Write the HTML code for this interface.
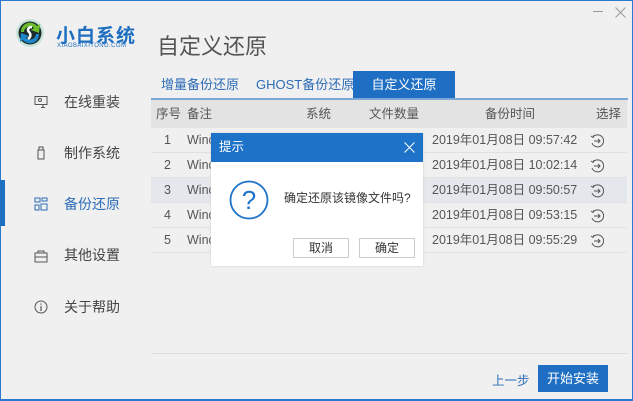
<!DOCTYPE html>
<html><head><meta charset="utf-8"><style>
*{margin:0;padding:0;box-sizing:border-box}
body{width:633px;height:401px;overflow:hidden;background:#f0f0f0;font-family:"Liberation Sans","Noto Sans CJK SC",sans-serif;position:relative}
.win{position:absolute;left:0;top:0;width:633px;height:401px;border:1px solid #2a7bd0;border-bottom-width:2px;border-right-width:1px}
.a{position:absolute;white-space:nowrap}
.nav{position:absolute;left:64px;font-size:14px;color:#444}
.ico{position:absolute;left:34px}
.tab{position:absolute;top:71px;height:27px;line-height:27px;font-size:13px;color:#2e6db8;text-align:center;white-space:nowrap}
.row{position:absolute;left:151px;width:476px;height:25px;border-bottom:1px solid #e0e0e0;font-size:12.5px;color:#555;line-height:25px}
.row span{position:absolute}
.rt{position:absolute;left:590px;width:14px;height:14px}
</style></head><body>
<div class="win"></div>
<svg class="a" style="left:15px;top:18px" width="30" height="30" viewBox="0 0 30 30">
<circle cx="15" cy="15" r="14" fill="#c9e4d8"/><circle cx="15" cy="15" r="11.5" fill="#1d2a2c"/>
<path d="M6 14 A9 9 0 0 1 22 8 L25 6 L24 15 L16 12 L19 10 A6 6 0 0 0 9 14Z" fill="#6cbc2c"/>
<path d="M24 16 A9 9 0 0 1 8 22 L5 24 L6 15 L14 18 L11 20 A6 6 0 0 0 21 16Z" fill="#1f86c8"/>
<path d="M17 9 C13 9 12 12 14 14 C16 16 16 19 13 21" stroke="#fff" stroke-width="2.5" fill="none"/>
</svg>
<div class="a" style="left:56px;top:21px;font-size:19px;font-weight:bold;color:#1f6fc0;letter-spacing:1px">小白系统</div>
<div class="a" style="left:57px;top:43px;font-size:6px;color:#1f6fc0;letter-spacing:0.4px">XIAOBAIXITONG.COM</div>
<div class="a" style="left:157px;top:29px;font-size:22px;color:#555">自定义还原</div>
<div class="a" style="left:593px;top:11px;width:10px;height:1px;background:#999"></div>
<svg class="a" style="left:615px;top:7px" width="11" height="11"><path d="M0.5 0.5L10.5 10.5M10.5 0.5L0.5 10.5" stroke="#999" stroke-width="1"/></svg>
<div class="a" style="left:0;top:180px;width:5px;height:46px;background:#1e6fc3"></div>
<svg class="ico" style="top:95px" width="14" height="14"><rect x="1" y="1.5" width="12" height="8" fill="none" stroke="#555"/><circle cx="6" cy="5" r="1.5" fill="none" stroke="#555"/><path d="M7 12.5H11M9 9.5v3" stroke="#555"/></svg>
<div class="nav" style="top:92px">在线重装</div>
<svg class="ico" style="top:146px" width="14" height="14"><rect x="4" y="4" width="6" height="9" fill="none" stroke="#555"/><path d="M5 4V1h4v3" fill="none" stroke="#555"/></svg>
<div class="nav" style="top:143px">制作系统</div>
<svg class="ico" style="top:197px" width="14" height="14"><rect x="1" y="1" width="5" height="4" fill="none" stroke="#2e6db8"/><rect x="8" y="1" width="5" height="3" fill="none" stroke="#2e6db8"/><rect x="1" y="8" width="4" height="5" fill="none" stroke="#2e6db8"/><rect x="7" y="7" width="6" height="6" fill="none" stroke="#2e6db8"/></svg>
<div class="nav" style="top:194px;color:#2e6db8">备份还原</div>
<svg class="ico" style="top:249px" width="14" height="14"><rect x="1" y="4" width="12" height="9" fill="none" stroke="#555"/><path d="M4 4V2h6v2M1 8h12" fill="none" stroke="#555"/></svg>
<div class="nav" style="top:245px">其他设置</div>
<svg class="ico" style="top:300px" width="14" height="14"><circle cx="7" cy="7" r="6" fill="none" stroke="#555"/><path d="M7 6v5M7 3.5v1.3" stroke="#555" stroke-width="1.2"/></svg>
<div class="nav" style="top:297px">关于帮助</div>
<div class="tab" style="left:160px;width:80px">增量备份还原</div>
<div class="tab" style="left:256px;width:96px">GHOST备份还原</div>
<div class="tab" style="left:353px;width:102px;background:#1e6fc3;color:#fff">自定义还原</div>
<div class="a" style="left:151px;top:98px;width:477px;height:2px;background:#7da9d8"></div>
<div class="row" style="top:100px;height:28px;line-height:28px;background:#e3e3e3;border:none;color:#555">
<span style="left:5px">序号</span><span style="left:36px">备注</span><span style="left:155px">系统</span><span style="left:218px">文件数量</span><span style="left:334px">备份时间</span><span style="left:445px">选择</span></div>
<div class="row" style="top:128px"><span style="left:13px">1</span><span style="left:36px">Wind</span><span style="left:281px">2019年01月08日 09:57:42</span></div>
<div class="row" style="top:153px"><span style="left:13px">2</span><span style="left:36px">Wind</span><span style="left:281px">2019年01月08日 10:02:14</span></div>
<div class="row" style="top:178px;background:#e4e7eb"><span style="left:13px">3</span><span style="left:36px">Wind</span><span style="left:281px">2019年01月08日 09:50:57</span></div>
<div class="row" style="top:203px"><span style="left:13px">4</span><span style="left:36px">Wind</span><span style="left:281px">2019年01月08日 09:53:15</span></div>
<div class="row" style="top:228px"><span style="left:13px">5</span><span style="left:36px">Wind</span><span style="left:281px">2019年01月08日 09:55:29</span></div>
<svg class="rt" style="top:134px" viewBox="0 0 14 14"><path d="M3 3A6 6 0 1 1 2 9" fill="none" stroke="#555"/><path d="M1 2l2 1.5L4 1M4 7h6M8 5l2 2-2 2" fill="none" stroke="#555"/></svg>
<svg class="rt" style="top:159px" viewBox="0 0 14 14"><path d="M3 3A6 6 0 1 1 2 9" fill="none" stroke="#555"/><path d="M1 2l2 1.5L4 1M4 7h6M8 5l2 2-2 2" fill="none" stroke="#555"/></svg>
<svg class="rt" style="top:184px" viewBox="0 0 14 14"><path d="M3 3A6 6 0 1 1 2 9" fill="none" stroke="#555"/><path d="M1 2l2 1.5L4 1M4 7h6M8 5l2 2-2 2" fill="none" stroke="#555"/></svg>
<svg class="rt" style="top:209px" viewBox="0 0 14 14"><path d="M3 3A6 6 0 1 1 2 9" fill="none" stroke="#555"/><path d="M1 2l2 1.5L4 1M4 7h6M8 5l2 2-2 2" fill="none" stroke="#555"/></svg>
<svg class="rt" style="top:234px" viewBox="0 0 14 14"><path d="M3 3A6 6 0 1 1 2 9" fill="none" stroke="#555"/><path d="M1 2l2 1.5L4 1M4 7h6M8 5l2 2-2 2" fill="none" stroke="#555"/></svg>
<div class="a" style="left:211px;top:133px;width:212px;height:133px;background:#fff;box-shadow:0 0 2px #ccc">
<div style="height:29px;background:#1e73c8;color:#fff;font-size:12.5px;line-height:29px;padding-left:8px">提示</div>
<svg style="position:absolute;left:193px;top:9px" width="11" height="11"><path d="M0.5 0.5L10.5 10.5M10.5 0.5L0.5 10.5" stroke="#fff"/></svg>
<svg style="position:absolute;left:18px;top:47px" width="40" height="40"><circle cx="20" cy="20" r="18.5" fill="none" stroke="#1e73c8" stroke-width="1.8"/><text x="20" y="29" text-anchor="middle" font-size="26" fill="#1e73c8" font-family="Liberation Sans">?</text></svg>
<div style="position:absolute;left:73px;top:56px;font-size:12px;color:#333">确定还原该镜像文件吗?</div>
<div style="position:absolute;left:82px;top:105px;width:56px;height:20px;border:1px solid #ccc;font-size:12px;color:#333;text-align:center;line-height:18px">取消</div>
<div style="position:absolute;left:148px;top:105px;width:56px;height:20px;border:1px solid #ccc;font-size:12px;color:#333;text-align:center;line-height:18px">确定</div>
</div>
<div class="a" style="left:151px;top:353px;width:477px;height:1px;background:#ddd"></div>
<div class="a" style="left:492px;top:370px;font-size:12.5px;color:#2e6db8">上一步</div>
<div class="a" style="left:538px;top:365px;width:70px;height:27px;background:#1e6fc3;color:#fff;font-size:13px;text-align:center;line-height:27px">开始安装</div>
</body></html>
